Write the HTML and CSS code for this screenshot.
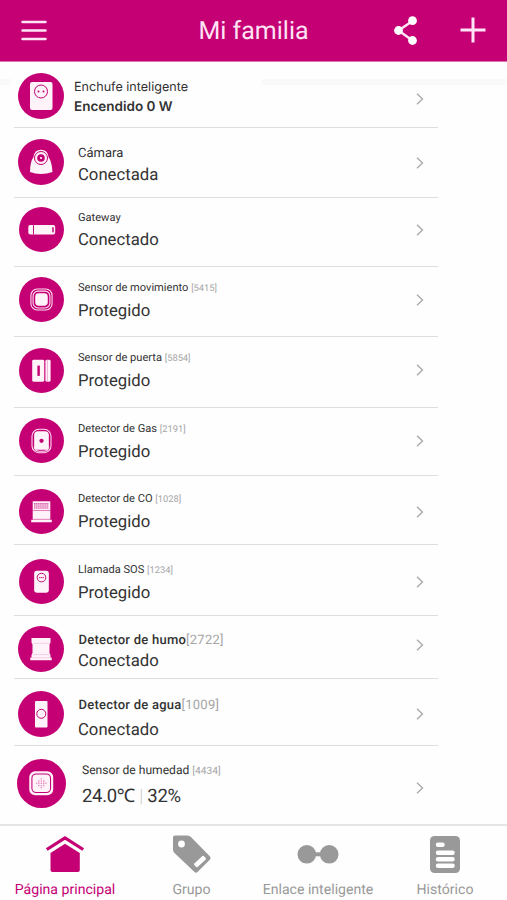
FILE: index.html
```html
<!DOCTYPE html>
<html lang="es">
<head>
<meta charset="utf-8">
<title>Mi familia</title>
<link rel="stylesheet" href="styles.css">
</head>
<body>
<div class="app">
  <header class="topbar">
    <svg class="menu" width="28" height="24" viewBox="0 0 28 24"><path d="M2.500 3H25.500M2.500 11.500H25.500M2.500 20H25.500"/></svg>
    <h1>Mi familia</h1>
    <svg class="share" width="26" height="30" viewBox="0 0 26 30"><path d="M19.500 5L5.500 14.500L19.500 24.500"/><circle cx="19.500" cy="4.700" r="4.400"/><circle cx="5.500" cy="14.500" r="4.400"/><circle cx="19.500" cy="24.500" r="4.400"/></svg>
    <svg class="plus" width="28" height="28" viewBox="0 0 28 28"><path d="M1.500 13H26.500M14 .5V25.500"/></svg>
  </header>
  <main class="devices">
    <article class="row plug">
      <svg class="icon" viewBox="0 0 46 46"><circle class="disc" cx="23" cy="23" r="23"/><rect class="w" x="12" y="9" width="22.500" height="28" rx="2"/><circle class="p" cx="23" cy="18.500" r="6.500"/><circle class="m" cx="20.500" cy="18.500" r="1"/><circle class="m" cx="25.500" cy="18.500" r="1"/></svg>
      <div class="info"><h2>Enchufe inteligente</h2><p>Encendido 0 W</p></div>
      <svg class="chev" viewBox="0 0 8 12"><path d="M1 .8L6.500 6L1 11.200"/></svg>
    </article>
    <article class="row camera">
      <svg class="icon" viewBox="0 0 46 46"><circle class="disc" cx="23" cy="23" r="23"/><path class="w" d="M15.500 18Q16.500 10.800 23 10.800T30.500 18Q34 23 34.500 33Q29 35 23 35T12 33Q12 23 15.500 18Z"/><circle class="p" cx="23" cy="19" r="6.500"/><circle class="m" cx="23" cy="19" r="3.800"/><circle class="w" cx="23" cy="19" r="1.100"/></svg>
      <div class="info"><h2>Cámara</h2><p>Conectada</p></div>
      <svg class="chev" viewBox="0 0 8 12"><path d="M1 .8L6.500 6L1 11.200"/></svg>
    </article>
    <article class="row gateway">
      <svg class="icon" viewBox="0 0 46 46"><circle class="disc" cx="23" cy="23" r="23"/><rect class="w" x="9.500" y="18.500" width="27.500" height="9.500" rx="2"/><path class="p" d="M14.800 18.500V28"/><rect class="m" x="34" y="20.500" width="1.500" height="5.500" rx=".7"/></svg>
      <div class="info"><h2>Gateway</h2><p>Conectado</p></div>
      <svg class="chev" viewBox="0 0 8 12"><path d="M1 .8L6.500 6L1 11.200"/></svg>
    </article>
    <article class="row motion">
      <svg class="icon" viewBox="0 0 46 46"><circle class="disc" cx="23" cy="23" r="23"/><rect class="l" x="12.200" y="12.200" width="21.600" height="21.600" rx="6.500"/><rect class="l" x="14.400" y="14.400" width="17.200" height="17.200" rx="5"/><rect class="w" x="16.600" y="16.600" width="12.800" height="12.800" rx="3.500"/></svg>
      <div class="info"><h2>Sensor de movimiento <span>[5415]</span></h2><p>Protegido</p></div>
      <svg class="chev" viewBox="0 0 8 12"><path d="M1 .8L6.500 6L1 11.200"/></svg>
    </article>
    <article class="row door">
      <svg class="icon" viewBox="0 0 46 46"><circle class="disc" cx="23" cy="23" r="23"/><rect class="w" x="13.500" y="12" width="12.300" height="22.500" rx="1.500"/><rect class="w" x="27" y="12" width="5.300" height="22.500" rx="1.500"/><rect class="m" x="18.800" y="18" width="2.500" height="10.500"/><path class="p" d="M29 12V34.500" opacity=".3"/></svg>
      <div class="info"><h2>Sensor de puerta <span>[5854]</span></h2><p>Protegido</p></div>
      <svg class="chev" viewBox="0 0 8 12"><path d="M1 .8L6.500 6L1 11.200"/></svg>
    </article>
    <article class="row gas">
      <svg class="icon" viewBox="0 0 46 46"><circle class="disc" cx="23" cy="23" r="23"/><rect class="l" x="13.300" y="11.500" width="19.400" height="24" rx="7"/><rect class="w" x="15.500" y="13.500" width="15" height="19" rx="4"/><path class="l" d="M15.500 29Q16 34 21 34H25Q30 34 30.500 29"/><circle class="m" cx="23" cy="23.300" r="2.200"/></svg>
      <div class="info"><h2>Detector de Gas <span>[2191]</span></h2><p>Protegido</p></div>
      <svg class="chev" viewBox="0 0 8 12"><path d="M1 .8L6.500 6L1 11.200"/></svg>
    </article>
    <article class="row co">
      <svg class="icon" viewBox="0 0 46 46"><circle class="disc" cx="23" cy="23" r="23"/><path class="w" d="M14 12.500H32V31.500H33.500V34H12.500V31.500H14Z"/><path class="p dots" d="M15.500 15.200H30.500M15.500 17.300H30.500M15.500 19.400H30.500"/><path class="p" d="M14 22H32M13.500 31H32.500" opacity=".5"/></svg>
      <div class="info"><h2>Detector de CO <span>[1028]</span></h2><p>Protegido</p></div>
      <svg class="chev" viewBox="0 0 8 12"><path d="M1 .8L6.500 6L1 11.200"/></svg>
    </article>
    <article class="row sos">
      <svg class="icon" viewBox="0 0 46 46"><circle class="disc" cx="23" cy="23" r="23"/><rect class="w" x="15.500" y="12" width="15" height="22.500" rx="2.500"/><circle class="p" cx="23" cy="19" r="4.400"/><path class="p" d="M20.500 19H25.500" stroke-dasharray="1.300 .5"/></svg>
      <div class="info"><h2>Llamada SOS <span>[1234]</span></h2><p>Protegido</p></div>
      <svg class="chev" viewBox="0 0 8 12"><path d="M1 .8L6.500 6L1 11.200"/></svg>
    </article>
    <article class="row smoke">
      <svg class="icon" viewBox="0 0 46 46"><circle class="disc" cx="23" cy="23" r="23"/><path class="w" d="M13.500 12H32.500V16.500L31.500 18.500V27L32.500 29V31.500H33.700V34.200H12.300V31.500H13.500V29L14.500 27V18.500L13.500 16.500Z"/><path class="p" d="M15 17.300H31M15 28.500H31M13 31.700H33" opacity=".15"/></svg>
      <div class="info"><h2>Detector de humo<span>[2722]</span></h2><p>Conectado</p></div>
      <svg class="chev" viewBox="0 0 8 12"><path d="M1 .8L6.500 6L1 11.200"/></svg>
    </article>
    <article class="row water">
      <svg class="icon" viewBox="0 0 46 46"><circle class="disc" cx="23" cy="23" r="23"/><rect class="w" x="17" y="10" width="12.500" height="26.500" rx="1"/><circle class="p" cx="23.300" cy="22.800" r="4.500"/></svg>
      <div class="info"><h2>Detector de agua<span>[1009]</span></h2><p>Conectado</p></div>
      <svg class="chev" viewBox="0 0 8 12"><path d="M1 .8L6.500 6L1 11.200"/></svg>
    </article>
    <article class="row humidity">
      <svg class="icon" viewBox="0 0 46 46"><circle class="disc" cx="23" cy="23" r="23"/><rect class="w" x="11.500" y="11.500" width="22.500" height="22.500" rx="5.500"/><rect class="p" x="14" y="14" width="17.500" height="17.500" rx="4"/><path class="p dots" d="M22.800 18V27.500M20.500 20V26M25.100 20V26M18.500 22V24M27.200 22V24" opacity=".5"/></svg>
      <div class="info"><h2>Sensor de humedad <span>[4434]</span></h2><p>24.0℃ <i>|</i> 32%</p></div>
      <svg class="chev" viewBox="0 0 8 12"><path d="M1 .8L6.500 6L1 11.200"/></svg>
    </article>
  </main>
  <nav class="tabs">
    <a class="tab home"><svg width="40" height="38" viewBox="0 0 40 38"><path d="M1.800 14.500L20 3L38.200 14.500" fill="none" stroke="currentColor" stroke-width="3.200"/><path d="M20 8.800L34.800 18V35Q34.800 37 33 37H7.500Q5.500 37 5.500 35V18Z"/></svg><span>Página principal</span></a>
    <a class="tab group"><svg width="40" height="38" viewBox="0 0 40 38"><path d="M3 .5H15.500Q17.500 .5 19 2L38 21.500Q39.300 23 38 24.500L25.500 37Q24 38.500 22.500 37L2.500 18Q1 16.500 1 14.500V2.500Q1 .5 3 .5Z"/><circle class="hole" cx="9.500" cy="9" r="3.400"/><rect class="hole" x="-6.500" y="-2.400" width="13" height="4.800" rx="1" transform="translate(28 26.500) rotate(-43)"/></svg><span>Grupo</span></a>
    <a class="tab link"><svg width="42" height="38" viewBox="0 0 42 38"><circle cx="9.800" cy="19.300" r="9.300"/><circle cx="32.200" cy="19.300" r="9.300"/><path d="M17 17.300H25V21.300H17Z"/></svg><span>Enlace inteligente</span></a>
    <a class="tab history"><svg width="30" height="38" viewBox="0 0 30 38"><rect x="0" y="1" width="30" height="37" rx="4.500"/><g class="cut"><path d="M8 9.800H12.500M8 17.800H22.500M8 24.300H22.500M8 30.800H22.500"/></g></svg><span>Histórico</span></a>
  </nav>
</div>
</body>
</html>
```
FILE: styles.css
```css
* { box-sizing: border-box; margin: 0; padding: 0; }
body { background: #fefefe; font-family: Roboto, "Liberation Sans", sans-serif; color: #333; text-rendering: geometricPrecision; }
.app { position: relative; width: 507px; height: 900px; overflow: hidden; display: flex; flex-direction: column; }
.app::before, .app::after { content: ""; position: absolute; top: 79px; height: 6px; background: #f9f9f9; }
.app::before { left: 0; width: 11px; }
.app::after { left: 262px; right: 0; }

.topbar { flex: none; height: 62px; display: grid; grid-template-columns: 180px 147px 108px 1fr; align-items: center; background: #c40074; border-bottom: 1px solid #dc76ae; }
.topbar svg { fill: none; stroke: #ffe4f5; stroke-width: 2.5; stroke-linecap: round; }
.topbar .menu { margin-left: 20px; }
.topbar .share { margin-left: 66px; }
.topbar .share circle { fill: #fff; stroke: none; }
.topbar .plus { margin-left: 24px; stroke-width: 3; stroke-linecap: butt; }
.topbar h1 { padding-top: 2px; text-align: center; font-size: 25px; line-height: 30px; font-weight: 400; color: #ffe4f5; white-space: nowrap; }

.devices { flex: none; width: 424px; margin-left: 14px; }
.row { --size: 45px; --icon: 10px; --text: 13px; --gap: 5px; --chev: 27px; --name: 11.1px; --state: 16.7px; height: var(--h); display: flex; align-items: flex-start; border-bottom: 1px solid #dedede; }
.icon { flex: none; width: var(--size); height: var(--size); margin: var(--icon) 0 0 calc(27px - var(--size) / 2); }
.info { flex: 1; padding-top: var(--text); margin-left: calc(var(--left, 64px) - 27px - var(--size) / 2); white-space: nowrap; }
.info h2 { font-size: var(--name); line-height: 16px; font-weight: 400; }
.info h2 span { color: #a5a5a5; font-size: var(--code, 9.3px); }
.info p { margin-top: var(--gap); font-size: var(--state); line-height: 20px; }
.info i { color: #ccc; font-style: normal; font-weight: 300; }
.chev { flex: none; width: 8px; height: 12px; margin: var(--chev) 14px 0 0; fill: none; stroke: #aaa; stroke-width: 1.4; }

.disc, .m { fill: #c40074; }
.w { fill: #fff3fa; }
.p { fill: none; stroke: #c40074; stroke-width: 1; }
.l { fill: none; stroke: #ffe1f2; stroke-width: 1.1; }
.dots { stroke-dasharray: 1.3 .8; stroke-width: 1.1; }

.plug { --h: 66px; --size: 46px; --icon: 11px; --text: 18px; --gap: 1px; --chev: 31px; --left: 60px; --name: 12.6px; --state: 13.5px; font-family: Inter, sans-serif; }
.plug p { font-weight: 600; }
.camera { --h: 70px; --size: 46px; --icon: 10.5px; --text: 18px; --gap: 4px; --chev: 28.5px; --name: 13px; }
.gateway { --h: 69px; --icon: 8.5px; --text: 12px; --chev: 25.5px; }
.motion { --h: 70px; }
.door { --h: 71px; --icon: 10.5px; }
.gas { --h: 68px; }
.co { --h: 69px; --icon: 12.5px; --text: 15px; --chev: 29.5px; }
.sos { --h: 71px; --icon: 14px; --text: 17px; --chev: 31px; }
.smoke { --h: 63px; --size: 46px; --icon: 9.5px; --text: 17px; --gap: 3px; --chev: 23px; --name: 13px; --code: 13px; }
.water { --h: 67px; --size: 46px; --icon: 11.5px; --text: 19px; --gap: 7px; --chev: 29px; --name: 13px; --code: 13px; }
.smoke h2, .water h2 { font-weight: 500; letter-spacing: .25px; margin-left: .5px; }
.smoke h2 span, .water h2 span { font-weight: 400; }
.humidity { --h: 78px; --size: 49px; --icon: 12.5px; --text: 16px; --gap: 6px; --chev: 36px; --left: 68px; --name: 12.1px; --code: 10.2px; --state: 18.5px; border: 0; }
.humidity p { letter-spacing: -.3px; }

.tabs { flex: 1; display: grid; grid-template-columns: 130px 123px 130px 124px; border-top: 2px solid #e5e5e5; color: #999; }
.tab { display: flex; flex-direction: column; align-items: center; padding-top: 9px; font-size: 14.1px; line-height: 18px; white-space: nowrap; }
.tab svg { fill: currentColor; margin-bottom: 8px; overflow: visible; }
.home { color: #c40074; }
.cut { stroke: #fff; stroke-width: 4.5; stroke-linecap: round; }
.hole { fill: #fff; }
```
